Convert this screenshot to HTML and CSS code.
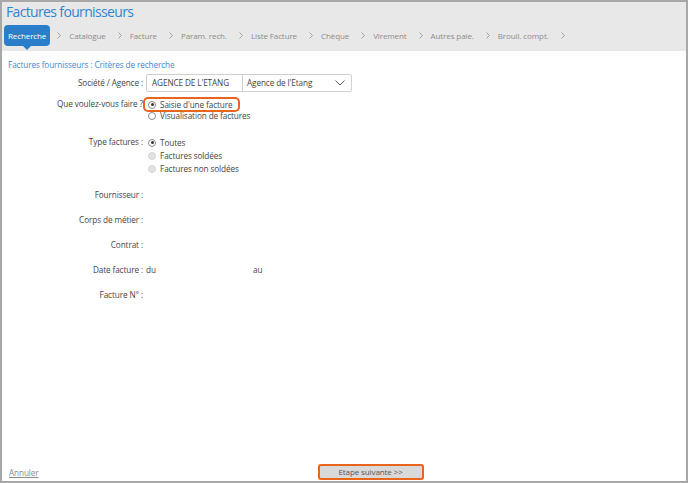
FILE: index.html
```html
<!DOCTYPE html>
<html lang="fr">
<head>
<meta charset="utf-8">
<title>Factures fournisseurs</title>
<link rel="stylesheet" href="styles.css">
</head>
<body>
<div class="frame">
  <header class="header">
    <h1 class="title">Factures fournisseurs</h1>
    <nav class="tabs">
      <a class="tab active">Recherche</a><span class="sep"><svg width="4" height="7" viewBox="0 0 4 7"><path d="M0.5 0.5 L3.5 3.5 L0.5 6.5" fill="none" stroke="#9a9a9a" stroke-width="0.9"/></svg></span>
      <a class="tab">Catalogue</a><span class="sep"><svg width="4" height="7" viewBox="0 0 4 7"><path d="M0.5 0.5 L3.5 3.5 L0.5 6.5" fill="none" stroke="#9a9a9a" stroke-width="0.9"/></svg></span>
      <a class="tab">Facture</a><span class="sep"><svg width="4" height="7" viewBox="0 0 4 7"><path d="M0.5 0.5 L3.5 3.5 L0.5 6.5" fill="none" stroke="#9a9a9a" stroke-width="0.9"/></svg></span>
      <a class="tab">Param. rech.</a><span class="sep"><svg width="4" height="7" viewBox="0 0 4 7"><path d="M0.5 0.5 L3.5 3.5 L0.5 6.5" fill="none" stroke="#9a9a9a" stroke-width="0.9"/></svg></span>
      <a class="tab">Liste Facture</a><span class="sep"><svg width="4" height="7" viewBox="0 0 4 7"><path d="M0.5 0.5 L3.5 3.5 L0.5 6.5" fill="none" stroke="#9a9a9a" stroke-width="0.9"/></svg></span>
      <a class="tab">Chèque</a><span class="sep"><svg width="4" height="7" viewBox="0 0 4 7"><path d="M0.5 0.5 L3.5 3.5 L0.5 6.5" fill="none" stroke="#9a9a9a" stroke-width="0.9"/></svg></span>
      <a class="tab">Virement</a><span class="sep"><svg width="4" height="7" viewBox="0 0 4 7"><path d="M0.5 0.5 L3.5 3.5 L0.5 6.5" fill="none" stroke="#9a9a9a" stroke-width="0.9"/></svg></span>
      <a class="tab">Autres paie.</a><span class="sep"><svg width="4" height="7" viewBox="0 0 4 7"><path d="M0.5 0.5 L3.5 3.5 L0.5 6.5" fill="none" stroke="#9a9a9a" stroke-width="0.9"/></svg></span>
      <a class="tab">Brouil. compt.</a><span class="sep"><svg width="4" height="7" viewBox="0 0 4 7"><path d="M0.5 0.5 L3.5 3.5 L0.5 6.5" fill="none" stroke="#9a9a9a" stroke-width="0.9"/></svg></span>
    </nav>
  </header>

  <main class="content">
    <div class="crumb">Factures fournisseurs : Critères de recherche</div>

    <div class="form">
      <div class="row row-agence">
        <label class="lbl">Société / Agence :</label>
        <div class="val">
          <div class="combo">
            <span class="code">AGENCE DE L'ETANG</span>
            <span class="sel">Agence de l'Etang
              <svg class="caret" width="10" height="6" viewBox="0 0 10 6"><path d="M0.5 0.5 L5 5 L9.5 0.5" fill="none" stroke="#555" stroke-width="1"/></svg>
            </span>
          </div>
        </div>
      </div>

      <div class="row row-action">
        <label class="lbl">Que voulez-vous faire ?</label>
        <div class="val opts">
          <span class="opt highlight"><span class="radio checked"></span>Saisie d'une facture</span>
          <span class="opt"><span class="radio"></span>Visualisation de factures</span>
        </div>
      </div>

      <div class="row row-type">
        <label class="lbl">Type factures :</label>
        <div class="val opts opts-type">
          <span class="opt"><span class="radio checked"></span>Toutes</span>
          <span class="opt"><span class="radio disabled"></span>Factures soldées</span>
          <span class="opt"><span class="radio disabled"></span>Factures non soldées</span>
        </div>
      </div>

      <div class="fields">
        <div class="row"><label class="lbl">Fournisseur :</label><div class="val"></div></div>
        <div class="row"><label class="lbl">Corps de métier :</label><div class="val"></div></div>
        <div class="row"><label class="lbl">Contrat :</label><div class="val"></div></div>
        <div class="row"><label class="lbl">Date facture :</label><div class="val dates"><span class="du">du</span><span>au</span></div></div>
        <div class="row"><label class="lbl">Facture N° :</label><div class="val"></div></div>
      </div>
    </div>
  </main>

  <footer class="footer">
    <a class="cancel">Annuler</a>
    <button class="next">Etape suivante &gt;&gt;</button>
  </footer>
</div>
</body>
</html>
```

FILE: styles.css
```css
* { box-sizing: border-box; }

html, body {
  margin: 0;
  padding: 0;
  background: #ffffff;
}

body {
  font-family: "Open Sans", "Noto Sans", "Liberation Sans", sans-serif;
  font-size: 8.2px;
  letter-spacing: -0.1px;
  color: #454545;
}

.frame {
  width: 688px;
  height: 483px;
  border: 2px solid #a8a8a8;
  display: flex;
  flex-direction: column;
  overflow: hidden;
}

.header {
  background: #e8e8e8;
  height: 49px;
  padding: 0 0 0 2px;
}

.title {
  margin: 0;
  padding: 0 0 0 2px;
  font-size: 14px;
  line-height: 19px;
  font-weight: 400;
  color: #2f86d1;
  letter-spacing: -0.65px;
}

.tabs {
  display: flex;
  align-items: center;
  margin-top: 4px;
  height: 21px;
}

.tab {
  padding: 0 5px;
  color: #8c8c8c;
  font-size: 8px;
  line-height: 21px;
  white-space: nowrap;
}

.tab.active {
  position: relative;
  background: #2b7fca;
  color: #ffffff;
  border-radius: 4px;
  padding: 0 4px;
}

.tab.active::after {
  content: "";
  position: absolute;
  left: 50%;
  bottom: -4px;
  margin-left: -4px;
  border-left: 4px solid transparent;
  border-right: 4px solid transparent;
  border-top: 4px solid #2b7fca;
}

.sep {
  display: flex;
  align-items: center;
  margin: 0 3px 0 7px;
}

.content {
  flex: 1;
  padding: 8px 0 0 0;
}

.crumb {
  padding-left: 6px;
  color: #3a8bd4;
  font-size: 8.2px;
  line-height: 12px;
}

.form {
  margin-top: 3px;
}

.row {
  display: flex;
  align-items: flex-start;
}

.lbl {
  width: 141px;
  text-align: right;
  line-height: 12px;
  white-space: nowrap;
}

.val {
  margin-left: 3px;
  line-height: 12px;
}

.row-agence .lbl { line-height: 18px; }

.combo {
  display: flex;
  height: 18px;
  border: 1px solid #cfcfcf;
  border-radius: 2px;
  width: 206px;
  background: #fff;
}

.code {
  width: 96px;
  padding-left: 5px;
  line-height: 16px;
  border-right: 1px solid #cfcfcf;
  color: #444;
  white-space: nowrap;
}

.sel {
  flex: 1;
  display: flex;
  align-items: center;
  justify-content: space-between;
  padding: 0 6px 0 4px;
  line-height: 16px;
  color: #444;
  white-space: nowrap;
}

.row-action { margin-top: 6px; }
.row-type { margin-top: 14px; }

.opts {
  display: flex;
  flex-direction: column;
  align-items: flex-start;
}

.opt {
  display: flex;
  align-items: center;
  height: 12px;
  padding-left: 2px;
  white-space: nowrap;
}

.opts-type .opt { height: 13px; }

.radio {
  width: 8px;
  height: 8px;
  border-radius: 50%;
  border: 1px solid #8a8a8a;
  background: #fff;
  margin-right: 4px;
  position: relative;
  flex: none;
}

.radio.checked::after {
  content: "";
  position: absolute;
  left: 1.5px;
  top: 1.5px;
  width: 3px;
  height: 3px;
  border-radius: 50%;
  background: #333;
}

.radio.disabled {
  background: #e2e2e2;
  border-color: #d6d6d6;
}

.highlight {
  margin-left: -1px;
  padding-left: 3px;
  padding-right: 6px;
  height: 11px;
  margin-top: 1px;
  border-radius: 3px;
  box-shadow: 0 0 0 2px #e8651e;
}

.fields {
  margin-top: 14px;
  display: flex;
  flex-direction: column;
  gap: 13px;
}

.fields .row { height: 12px; }

.dates .du {
  display: inline-block;
  width: 107px;
}

.footer {
  display: flex;
  align-items: flex-end;
  height: 22px;
  padding: 0 0 1px 7px;
}

.cancel {
  color: #8a8a8a;
  text-decoration: underline;
  line-height: 12px;
  margin-bottom: 1px;
}

.next {
  margin-left: 279px;
  width: 106px;
  height: 16px;
  padding: 0;
  background: #d9d9d9;
  border: 2px solid #e8651e;
  border-radius: 3px;
  font-family: inherit;
  font-size: 8px;
  letter-spacing: -0.1px;
  color: #555;
  line-height: 12px;
}
```
